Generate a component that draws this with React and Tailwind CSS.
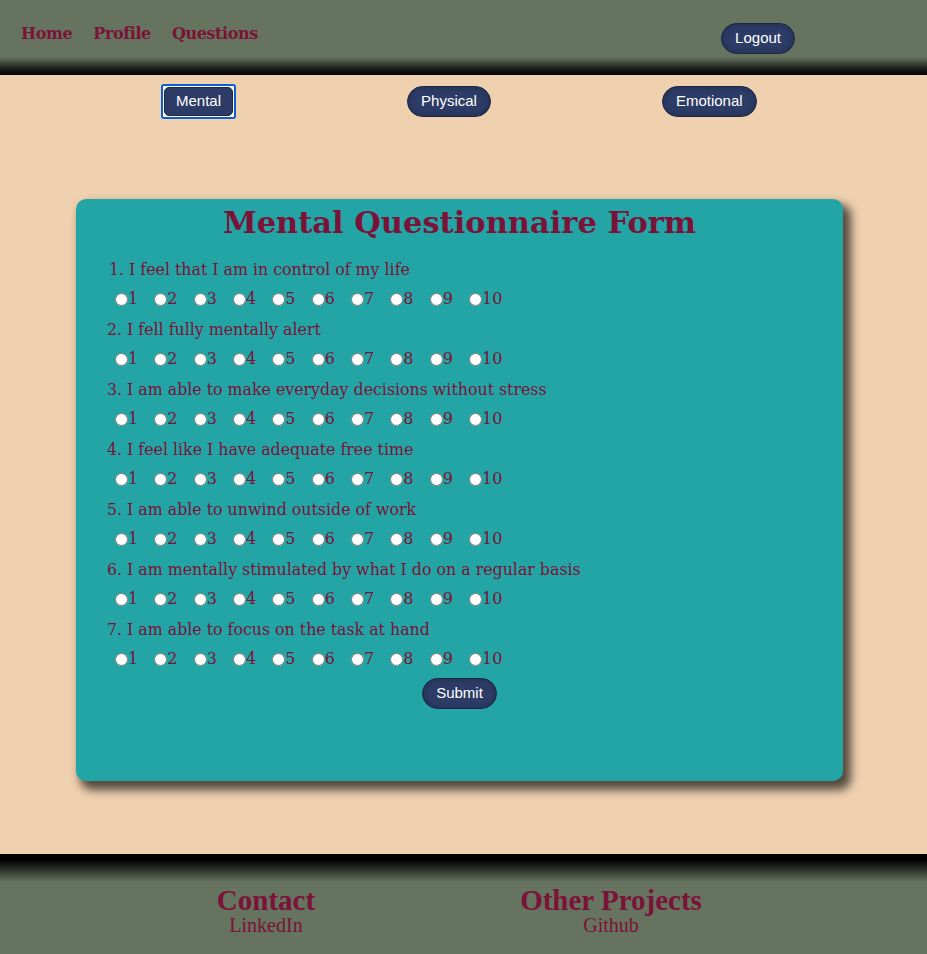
import { useState } from 'react';

const serif = "font-['DejaVu_Serif','Liberation_Serif',serif]";
const sans = "font-['Liberation_Sans',Arial,sans-serif]";

const questions = [
  '1. I feel that I am in control of my life',
  '2. I fell fully mentally alert',
  '3. I am able to make everyday decisions without stress',
  '4. I feel like I have adequate free time',
  '5. I am able to unwind outside of work',
  '6. I am mentally stimulated by what I do on a regular basis',
  '7. I am able to focus on the task at hand',
];

const PillButton = ({ children, focused = false }) => {
  if (focused) {
    return (
      <span className="inline-flex rounded-[3px] border-2 border-[#0a5fd4] bg-white p-px">
        <button className={`${sans} h-[29px] px-[11px] rounded-[5px] border border-[#1d2744] bg-[#2c3c66] text-[15px] text-white`}>
          {children}
        </button>
      </span>
    );
  }
  return (
    <button className={`${sans} h-[31px] px-[13px] rounded-full border border-[#1d2744] bg-[#2c3c66] text-[15px] text-white shadow-[inset_0_0_6px_rgba(0,0,0,0.25)]`}>
      {children}
    </button>
  );
};

export default function App() {
  const [answers, setAnswers] = useState({});

  return (
    <div className="flex min-h-[954px] flex-col bg-[#efd1b0]">
      {/* Header */}
      <header className="flex h-[75px] items-start bg-[linear-gradient(to_bottom,#65735f_0%,#65735f_76%,#1a1d18_92%,#000_100%)]">
        <nav className={`${serif} flex gap-[21px] pl-[21px] pt-[22px] text-[16px] font-bold tracking-[-0.4px] text-[#7b1238]`}>
          <a href="#">Home</a>
          <a href="#">Profile</a>
          <a href="#">Questions</a>
        </nav>
        <div className="ml-auto mr-[132px] mt-[23px]">
          <PillButton>Logout</PillButton>
        </div>
      </header>

      {/* Tabs */}
      <div className="flex items-center gap-[171px] pl-[161px] pt-[9px]">
        <PillButton focused>Mental</PillButton>
        <PillButton>Physical</PillButton>
        <PillButton>Emotional</PillButton>
      </div>

      {/* Form card */}
      <main className="flex flex-1 justify-center pt-[80px] pb-[73px]">
        <form className="w-[767px] ml-[-8px] rounded-[10px] bg-[#23a5a6] px-[31px] pt-[3px] pb-[67px] shadow-[6px_7px_10px_2px_rgba(0,0,0,0.65)]">
          <h1 className={`${serif} mb-[16px] text-center text-[30.5px] font-bold leading-[40px] text-[#7b1238]`}>
            Mental Questionnaire Form
          </h1>
          {questions.map((q, qi) => (
            <div key={qi} className="mb-[7px]">
              <p className={`${serif} text-[15.8px] leading-[24px] text-[#7b1238] ${qi === 0 ? 'pl-[2px]' : ''}`}>{q}</p>
              <div className={`${serif} mt-[5px] flex pl-[3px] text-[16px] leading-[24px] text-[#7b1238]`}>
                {Array.from({ length: 10 }, (_, i) => i + 1).map((n) => (
                  <label key={n} className="flex w-[39.33px] items-center">
                    <input
                      type="radio"
                      name={`q${qi}`}
                      checked={answers[qi] === n}
                      onChange={() => setAnswers({ ...answers, [qi]: n })}
                      className="ml-[5px] mr-0 h-[13px] w-[13px]"
                    />
                    <span>{n}</span>
                  </label>
                ))}
              </div>
            </div>
          ))}
          <div className="mt-[4px] flex justify-center">
            <PillButton>Submit</PillButton>
          </div>
        </form>
      </main>

      {/* Footer */}
      <footer className="flex h-[100px] gap-[145px] pl-[166px] pt-[31px] bg-[linear-gradient(to_bottom,#000_0%,#000_6%,#65735f_28%,#65735f_100%)] text-[#7b1238]">
        <div className="flex w-[200px] flex-col items-center font-['Liberation_Serif',serif]">
          <h2 className="text-[29px] font-bold leading-[30px]">Contact</h2>
          <a href="#" className="text-[20px] leading-[20px]">LinkedIn</a>
        </div>
        <div className="flex w-[200px] flex-col items-center font-['Liberation_Serif',serif]">
          <h2 className="text-[29px] font-bold leading-[30px]">Other Projects</h2>
          <a href="#" className="text-[20px] leading-[20px]">Github</a>
        </div>
      </footer>
    </div>
  );
}
